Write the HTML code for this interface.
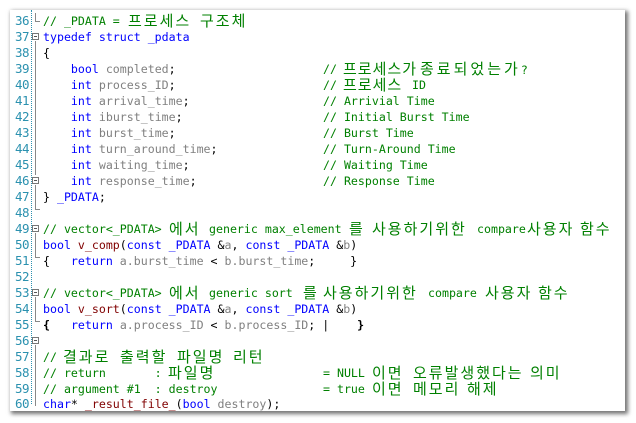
<!DOCTYPE html>
<html><head><meta charset="utf-8"><style>
html,body{margin:0;padding:0;background:#fff;width:636px;height:423px;overflow:hidden;position:relative}
#p{position:absolute;left:10px;top:10px;width:615px;height:401px;background:#fff;box-shadow:2px 2px 4px 1px rgba(0,0,0,0.55)}
#w{position:absolute;left:0;top:2px;width:615px;height:399px}
.l{position:absolute;left:0;width:615px;height:16px;line-height:16px;font-family:"DejaVu Sans Mono","Liberation Mono",monospace;font-size:11.6px;white-space:pre;color:#000}
.n{position:absolute;left:0;width:19px;text-align:right;color:#2b91af;font-family:"DejaVu Sans Mono",monospace;font-size:12.5px;height:16px;line-height:16px;letter-spacing:-0.5px}
.c{position:absolute;left:33px}
.m{position:absolute;left:313px}
.a{position:absolute;top:0}
.k{color:#0000ff}.g{color:#008000}.v{color:#808080}.f{color:#800000}
.h{font-family:"Noto Sans CJK KR",sans-serif;font-size:15px;letter-spacing:2px;line-height:16px;color:#008000}
.h2{letter-spacing:1px}
.h3{letter-spacing:3px}
#dot{position:absolute;left:21px;top:-2px;height:394px;border-left:1px dotted #2b91af}
.vl{position:absolute;left:25px;width:1px;background:#888}
.bx{position:absolute;left:22px;width:7px;height:7px;border:1px solid #777;box-sizing:border-box}
.bx:after{content:"";position:absolute;left:1px;top:2px;width:3px;height:1px;background:#555}
.cr{position:absolute;left:25px;width:5px;height:1px;background:#888}
</style></head><body><div id="p"><div id="w">
<div id="dot"></div>
<div class="vl" style="top:1px;height:9px"></div><div class="cr" style="top:9px"></div>
<div class="bx" style="top:21px"></div>
<div class="vl" style="top:29px;height:134px"></div>
<div class="bx" style="top:165px"></div>
<div class="vl" style="top:173px;height:24px"></div><div class="cr" style="top:197px"></div>
<div class="bx" style="top:213px"></div>
<div class="vl" style="top:221px;height:24px"></div><div class="cr" style="top:245px"></div>
<div class="bx" style="top:277px"></div>
<div class="vl" style="top:285px;height:24px"></div><div class="cr" style="top:309px"></div>
<div class="bx" style="top:325px"></div>
<div class="vl" style="top:333px;height:61px"></div>

<div class="l g" style="top:1px"><span class="n">36</span><span class="c g">// _PDATA =</span><span class="a h" style="left:118px">프로세스</span><span class="a h" style="left:190px">구조체</span></div>
<div class="l" style="top:17px"><span class="n">37</span><span class="c k">typedef struct _pdata</span></div>
<div class="l" style="top:33px"><span class="n">38</span><span class="c">{</span></div>
<div class="l" style="top:49px"><span class="n">39</span><span class="c">    <span class="k">bool</span> <span class="v">completed</span>;</span><span class="m g">//</span><span class="a h h2" style="left:333px">프로세스가</span><span class="a g" style="left:410px"><span class="h h3">종료되었는가</span>?</span></div>
<div class="l" style="top:65px"><span class="n">40</span><span class="c">    <span class="k">int</span> <span class="v">process_ID</span>;</span><span class="m g">//</span><span class="a h h2" style="left:333px">프로세스</span><span class="a g" style="left:402px">ID</span></div>
<div class="l" style="top:81px"><span class="n">41</span><span class="c">    <span class="k">int</span> <span class="v">arrival_time</span>;</span><span class="m g">// Arrivial Time</span></div>
<div class="l" style="top:97px"><span class="n">42</span><span class="c">    <span class="k">int</span> <span class="v">iburst_time</span>;</span><span class="m g">// Initial Burst Time</span></div>
<div class="l" style="top:113px"><span class="n">43</span><span class="c">    <span class="k">int</span> <span class="v">burst_time</span>;</span><span class="m g">// Burst Time</span></div>
<div class="l" style="top:129px"><span class="n">44</span><span class="c">    <span class="k">int</span> <span class="v">turn_around_time</span>;</span><span class="m g">// Turn-Around Time</span></div>
<div class="l" style="top:145px"><span class="n">45</span><span class="c">    <span class="k">int</span> <span class="v">waiting_time</span>;</span><span class="m g">// Waiting Time</span></div>
<div class="l" style="top:161px"><span class="n">46</span><span class="c">    <span class="k">int</span> <span class="v">response_time</span>;</span><span class="m g">// Response Time</span></div>
<div class="l" style="top:177px"><span class="n">47</span><span class="c">} <span class="k">_PDATA</span>;</span></div>
<div class="l" style="top:193px"><span class="n">48</span></div>
<div class="l" style="top:209px"><span class="n">49</span><span class="c g">// vector&lt;_PDATA&gt;</span><span class="a h" style="left:159px">에서</span><span class="a g" style="left:199px">generic max_element</span><span class="a h" style="left:339px">를</span><span class="a h" style="left:362px">사용하기위한</span><span class="a g" style="left:467px">compare</span><span class="a h" style="left:517px">사용자</span><span class="a h" style="left:570px">함수</span></div>
<div class="l" style="top:225px"><span class="n">50</span><span class="c"><span class="k">bool</span> <span class="f">v_comp</span>(<span class="k">const _PDATA</span> &amp;<span class="v">a</span>, <span class="k">const _PDATA</span> &amp;<span class="v">b</span>)</span></div>
<div class="l" style="top:241px"><span class="n">51</span><span class="c">{   <span class="k">return</span> <span class="v">a.burst_time</span> &lt; <span class="v">b.burst_time</span>;     }</span></div>
<div class="l" style="top:257px"><span class="n">52</span></div>
<div class="l" style="top:273px"><span class="n">53</span><span class="c g">// vector&lt;_PDATA&gt;</span><span class="a h" style="left:159px">에서</span><span class="a g" style="left:199px">generic sort</span><span class="a h" style="left:293px">를</span><span class="a h" style="left:313px">사용하기위한</span><span class="a g" style="left:418px">compare</span><span class="a h" style="left:475px">사용자</span><span class="a h" style="left:528px">함수</span></div>
<div class="l" style="top:289px"><span class="n">54</span><span class="c"><span class="k">bool</span> <span class="f">v_sort</span>(<span class="k">const _PDATA</span> &amp;<span class="v">a</span>, <span class="k">const _PDATA</span> &amp;<span class="v">b</span>)</span></div>
<div class="l" style="top:305px"><span class="n">55</span><span class="c"><b>{</b>   <span class="k">return</span> <span class="v">a.process_ID</span> &lt; <span class="v">b.process_ID</span>; |    <b>}</b></span></div>
<div class="l" style="top:321px"><span class="n">56</span></div>
<div class="l" style="top:337px"><span class="n">57</span><span class="c g">//</span><span class="a h" style="left:53px">결과로</span><span class="a h" style="left:110px">출력할</span><span class="a h" style="left:167px">파일명</span><span class="a h" style="left:223px">리턴</span></div>
<div class="l" style="top:353px"><span class="n">58</span><span class="c g">// return       :</span><span class="a h" style="left:158px">파일명</span><span class="m g">= NULL</span><span class="a h" style="left:362px">이면</span><span class="a h" style="left:403px">오류발생했다는</span><span class="a h" style="left:520px">의미</span></div>
<div class="l" style="top:369px"><span class="n">59</span><span class="c g">// argument #1  : destroy</span><span class="m g">= true</span><span class="a h" style="left:362px">이면</span><span class="a h" style="left:403px">메모리</span><span class="a h" style="left:457px">해제</span></div>
<div class="l" style="top:384px"><span class="n">60</span><span class="c"><span class="k">char</span>* <span class="f">_result_file_</span>(<span class="k">bool</span> <span class="v">destroy</span>);</span></div>
</div></div></body></html>
